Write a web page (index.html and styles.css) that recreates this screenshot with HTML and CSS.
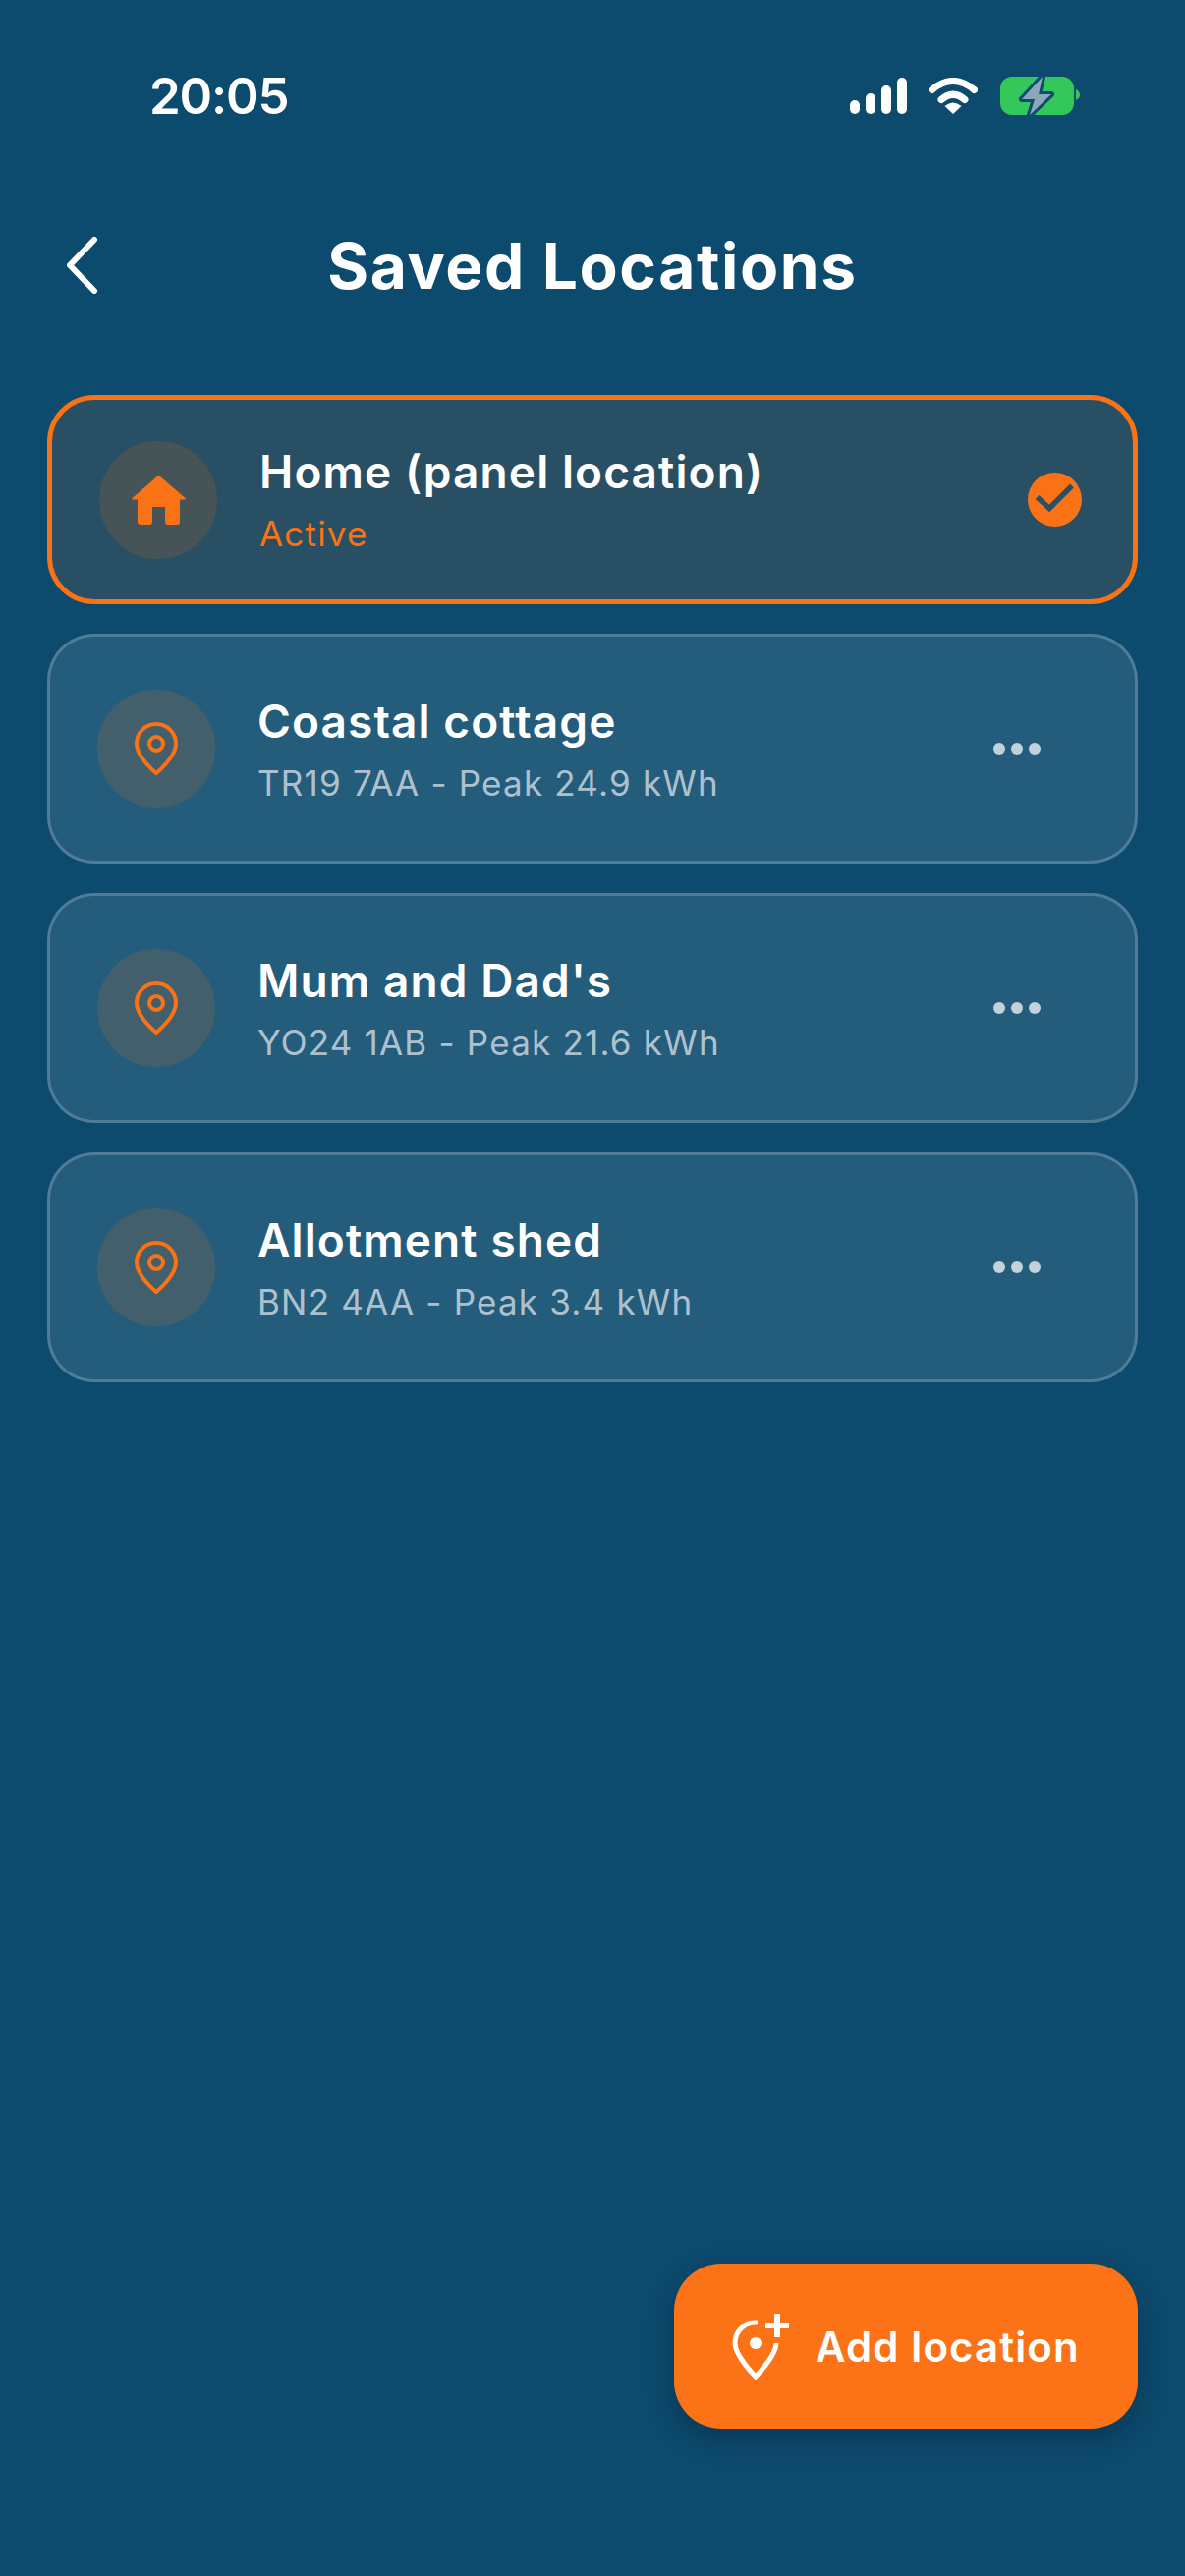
FILE: index.html
```html
<!DOCTYPE html>
<html lang="en">
<head>
  <meta charset="UTF-8" />
  <meta name="viewport" content="width=device-width, initial-scale=1.0" />
  <title>Saved Locations</title>
  <link rel="stylesheet" href="styles.css">
</head>
<body>
  <div class="page">
    <div class="status-bar">
      <span class="time">20:05</span>
      <div class="status-icons">
        <svg class="signal" width="58" height="37" viewBox="0 0 58 37" fill="#fff">
          <rect x="0" y="23" width="10" height="14" rx="5" />
          <rect x="16" y="16" width="10" height="21" rx="5" />
          <rect x="32" y="8" width="10" height="29" rx="5" />
          <rect x="48" y="0" width="10" height="37" rx="5" />
        </svg>
        <svg class="wifi" width="50" height="37" viewBox="0 0 50 37" fill="none" stroke="#fff" stroke-linecap="round">
          <path d="M3.5 12.5 Q25 -5.5 46.500 12.500" stroke-width="7" />
          <path d="M13 22.500 Q25 12 37 22.500" stroke-width="7" />
          <path d="M16.500 29 Q25 22 33.500 29 L25 37 Z" fill="#fff" stroke="none" />
        </svg>
        <svg class="battery" width="81" height="41" viewBox="0 0 81 41">
          <rect x="0" y="1" width="75" height="39" rx="12" fill="#34c759" />
          <path d="M77 14 Q81 16 81 19.500 Q81 23 77 25 Z" fill="#34c759" />
          <path d="M43 1 L22 24 L35 24 L30 40 L52 19 L39 19 Z" fill="#8ba7bb" stroke="#0c4a6e" stroke-width="6" stroke-linejoin="round" paint-order="stroke" />
        </svg>
      </div>
    </div>

    <div class="top-bar">
      <svg class="back" width="34" height="58" viewBox="0 0 34 58" fill="none" stroke="#fff" stroke-width="6" stroke-linecap="round" stroke-linejoin="round">
        <path d="M30 3 L5 29 L30 55" />
      </svg>
      <h1>Saved Locations</h1>
    </div>

    <div class="list">
      <div class="card active">
        <div class="icon-circle">
          <svg width="55" height="50" viewBox="0 0 55 50" fill="#f97316">
            <path d="M26 1 Q27.500 -.3 29 1 L54.500 23 Q55.500 24.500 54 24.500 L49 24.500 L49 47 Q49 50 46 50 L37 50 Q34 50 34 47 L34 32 L21 32 L21 47 Q21 50 18 50 L9 50 Q6 50 6 47 L6 24.500 L1 24.500 Q-.5 24.500 .5 23 Z" />
          </svg>
        </div>
        <div class="card-text">
          <div class="card-title">Home (panel location)</div>
          <div class="card-sub active-label">Active</div>
        </div>
        <svg class="check" width="55" height="55" viewBox="0 0 55 55" fill="none">
          <circle cx="27.500" cy="27.500" r="27.500" fill="#f97316" />
          <path d="M9.500 25 L22 36.500 L45 13.500" stroke="#2c4f63" stroke-width="5.500" />
        </svg>
      </div>

      <div class="card">
        <div class="icon-circle">
          <svg class="pin" width="46" height="56" viewBox="0 0 46 56" fill="none" stroke="#f97316" stroke-width="4">
            <path d="M23 53 C23 53 3 37 3 23 A20 20 0 0 1 43 23 C43 37 23 53 23 53 Z" />
            <circle cx="23" cy="23" r="7" />
          </svg>
        </div>
        <div class="card-text">
          <div class="card-title">Coastal cottage</div>
          <div class="card-sub">TR19 7AA - Peak 24.9 kWh</div>
        </div>
        <div class="more"><span></span><span></span><span></span></div>
      </div>

      <div class="card">
        <div class="icon-circle">
          <svg class="pin" width="46" height="56" viewBox="0 0 46 56" fill="none" stroke="#f97316" stroke-width="4">
            <path d="M23 53 C23 53 3 37 3 23 A20 20 0 0 1 43 23 C43 37 23 53 23 53 Z" />
            <circle cx="23" cy="23" r="7" />
          </svg>
        </div>
        <div class="card-text">
          <div class="card-title">Mum and Dad's</div>
          <div class="card-sub">YO24 1AB - Peak 21.6 kWh</div>
        </div>
        <div class="more"><span></span><span></span><span></span></div>
      </div>

      <div class="card">
        <div class="icon-circle">
          <svg class="pin" width="46" height="56" viewBox="0 0 46 56" fill="none" stroke="#f97316" stroke-width="4">
            <path d="M23 53 C23 53 3 37 3 23 A20 20 0 0 1 43 23 C43 37 23 53 23 53 Z" />
            <circle cx="23" cy="23" r="7" />
          </svg>
        </div>
        <div class="card-text">
          <div class="card-title">Allotment shed</div>
          <div class="card-sub">BN2 4AA - Peak 3.4 kWh</div>
        </div>
        <div class="more"><span></span><span></span><span></span></div>
      </div>
    </div>

    <button class="add-btn">
      <svg width="64" height="72" viewBox="0 -2 64 72" fill="none" stroke="#fff">
        <path d="M26 10 A21 21 0 0 0 3 31 C3 44 24 65 24 65 C24 65 45 44 45 31" stroke-width="5" />
        <circle cx="24" cy="31" r="6" fill="#fff" stroke="none" />
        <path d="M34 13 H58 M46 1 V25" stroke-width="6" />
      </svg>
      <span>Add location</span>
    </button>
  </div>
</body>
</html>
```

FILE: styles.css
```css
html, body {
  margin: 0;
  padding: 0;
}
body {
  background-color: #0c4a6e;
  color: #fff;
  font-family: "Inter", "Noto Sans", sans-serif;
}
.page {
  width: 1206px;
  height: 2622px;
  display: flex;
  flex-direction: column;
  overflow: hidden;
}

/* status bar */
.status-bar {
  height: 66px;
  margin-top: 64px;
  padding: 0 107px 0 152px;
  display: flex;
  align-items: center;
  justify-content: space-between;
}
.time {
  font-size: 51px;
  font-weight: 600;
  letter-spacing: -1.2px;
}
.status-icons {
  display: flex;
  align-items: center;
}
.wifi { margin-left: 22px; }
.battery { margin-left: 23px; }

/* header */
.top-bar {
  height: 140px;
  margin-top: 70px;
  display: flex;
  align-items: center;
  justify-content: center;
  position: relative;
}
.top-bar h1 {
  margin: 0;
  font-size: 64px;
  font-weight: 700;
  letter-spacing: 1.6px;
}
.back {
  position: absolute;
  left: 66px;
  top: 41px;
}

/* cards */
.list {
  margin: 62px 48px 0;
  display: flex;
  flex-direction: column;
  gap: 30px;
}
.card {
  box-sizing: border-box;
  height: 234px;
  padding: 0 48px;
  display: flex;
  align-items: center;
  gap: 43px;
  border: 3px solid rgba(255, 255, 255, 0.2);
  border-radius: 48px;
  background-color: rgba(255, 255, 255, 0.1);
}
.card.active {
  height: 213px;
  border: 5px solid #f97316;
  background-color: rgba(249, 115, 22, 0.12);
}
.icon-circle {
  width: 120px;
  height: 120px;
  flex: none;
  display: flex;
  align-items: center;
  justify-content: center;
  border-radius: 50%;
  background-color: rgba(249, 115, 22, 0.15);
}
.card-text {
  flex: 1;
  min-width: 0;
}
.card-title {
  font-size: 46px;
  font-weight: 600;
  line-height: 56px;
  letter-spacing: 1.1px;
}
.card-sub {
  margin-top: 13px;
  font-size: 35px;
  line-height: 44px;
  letter-spacing: 1.2px;
  color: rgba(255, 255, 255, 0.65);
}
.active-label {
  color: #f97316;
}
.check {
  flex: none;
  margin-right: 4px;
}
.more {
  display: flex;
  gap: 6px;
  margin-right: 48px;
}
.more span {
  width: 12px;
  height: 12px;
  border-radius: 50%;
  background-color: rgba(255, 255, 255, 0.72);
}

/* add button */
.add-btn {
  box-sizing: border-box;
  align-self: flex-end;
  width: 472px;
  height: 168px;
  margin: auto 48px 150px 0;
  padding: 0 0 0 59px;
  display: flex;
  align-items: center;
  gap: 21px;
  border: none;
  border-radius: 48px;
  background-color: #fb7316;
  box-shadow: 0 10px 30px rgba(0, 0, 0, 0.25);
  color: #fff;
  font-family: inherit;
  font-size: 42px;
  font-weight: 600;
  letter-spacing: 1.1px;
}
```
